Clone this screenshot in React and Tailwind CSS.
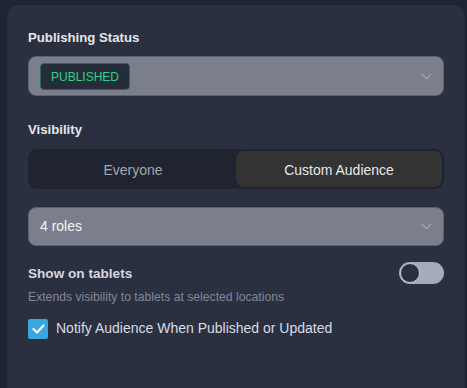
import React, { useState } from 'react';

const Chevron = () => (
  <svg width="11" height="7" viewBox="0 0 11 7" fill="none" className="shrink-0">
    <path d="M0.8 0.8L5.5 5.8L10.2 0.8" stroke="#a9aebb" strokeWidth="1.1" />
  </svg>
);

const App = () => {
  const [audience, setAudience] = useState('custom');
  const [tablets, setTablets] = useState(false);
  const [notify, setNotify] = useState(true);

  return (
    <div
      className="w-[467px] h-[388px] overflow-hidden bg-[#1e2431] pt-[5px] pl-[7px] pr-[2px]"
      style={{ fontFamily: '"Liberation Sans", Arial, sans-serif' }}
    >
      <div className="h-[400px] bg-[#2a3040] rounded-t-[11px] px-[21px] pt-[25px]">
        {/* Publishing status */}
        <h3 className="text-[13.2px] font-bold text-[#e3e6ec] leading-[16px]">Publishing Status</h3>
        <div className="mt-[10px] h-[40px] rounded-[8px] bg-[#7b7f8b] border border-[#5b6275] flex items-center justify-between pl-[11px] pr-[11px]">
          <span className="h-[27px] mt-[1px] px-[10px] flex items-center rounded-[4px] bg-[#262d3a] border border-[#2c6a55] text-[#2fd484] text-[12px]">
            PUBLISHED
          </span>
          <Chevron />
        </div>

        {/* Visibility */}
        <h3 className="mt-[26px] text-[13.2px] font-bold text-[#e3e6ec] leading-[16px]">Visibility</h3>
        <div className="mt-[11px] h-[40px] rounded-[9px] bg-[#1f2430] p-[2px] grid grid-cols-2">
          <button
            onClick={() => setAudience('everyone')}
            className={`rounded-[8px] text-[14px] pt-[2px] ${audience === 'everyone' ? 'bg-[#333333] text-[#e8e8e8]' : 'text-[#a5a8ae]'}`}
          >
            Everyone
          </button>
          <button
            onClick={() => setAudience('custom')}
            className={`rounded-[8px] text-[14px] pt-[2px] ${audience === 'custom' ? 'bg-[#333333] text-[#e8e8e8]' : 'text-[#a5a8ae]'}`}
          >
            Custom Audience
          </button>
        </div>

        <div className="mt-[18px] h-[39px] rounded-[8px] bg-[#7b7f8b] border border-[#5b6275] flex items-center justify-between pl-[11px] pr-[11px]">
          <span className="text-[14px] text-[#f4f5f7]">4 roles</span>
          <Chevron />
        </div>

        {/* Tablets */}
        <div className="mt-[16px] flex items-start justify-between">
          <div>
            <div className="text-[13.6px] font-bold text-[#d4d8e0] leading-[16px] mt-[4px]">Show on tablets</div>
            <div className="mt-[8px] text-[12.2px] text-[#7f889a] leading-[14px]">
              Extends visibility to tablets at selected locations
            </div>
          </div>
          <button
            onClick={() => setTablets(!tablets)}
            className={`w-[45px] h-[22px] rounded-full flex items-center px-[1px] ${tablets ? 'bg-[#3aa8e0] justify-end' : 'bg-[#a3abbd] justify-start'}`}
          >
            <span className="w-[20px] h-[20px] rounded-full bg-[#2a3040] border-[1.5px] border-[#c3c9d6]" />
          </button>
        </div>

        {/* Notify */}
        <label className="mt-[14px] flex items-center gap-[8px] cursor-pointer">
          <span
            onClick={() => setNotify(!notify)}
            className={`w-[20px] h-[20px] rounded-[2px] flex items-center justify-center ${notify ? 'bg-[#3aa6e0]' : 'border border-[#7f889a]'}`}
          >
            {notify && (
              <svg width="13" height="10" viewBox="0 0 13 10" fill="none">
                <path d="M1.5 5L5 8.5L11.5 1.5" stroke="white" strokeWidth="2.2" strokeLinecap="round" strokeLinejoin="round" />
              </svg>
            )}
          </span>
          <span className="text-[14px] text-[#d8dce3]">Notify Audience When Published or Updated</span>
        </label>
      </div>
    </div>
  );
};

export default App;
